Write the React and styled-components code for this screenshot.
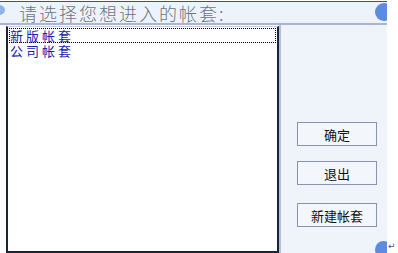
import React from 'react';
import styled, { createGlobalStyle } from 'styled-components';

const accounts = ['新版帐套', '公司帐套'];
const actions = [
  { label: '确定', top: 97 },
  { label: '退出', top: 15 },
  { label: '新建帐套', top: 18 },
];

const App = () => (
  <Page>
    <GlobalStyle />
    <Frame>
      <TopLine />
      <Header>
        <Title>请选择您想进入的帐套:</Title>
      </Header>
      <Body>
        <ListColumn>
          <ListBox>
            {accounts.map((name, i) => (
              <Option key={name} focused={i === 0}>{name}</Option>
            ))}
          </ListBox>
        </ListColumn>
        <Divider />
        <Side>
          {actions.map(a => (
            <Button key={a.label} top={a.top}>{a.label}</Button>
          ))}
        </Side>
      </Body>
      <CornerDot left />
      <CornerDot top />
      <CornerDot />
    </Frame>
    <Return>↵</Return>
  </Page>
);

export default App;

const GlobalStyle = createGlobalStyle`
  body {
    margin: 0;
    background: #fff;
    font-family: "Noto Sans CJK SC", "Liberation Sans", sans-serif;
  }
`

const Page = styled.div`
  position: relative;
  width: 398px;
  height: 253px;
  overflow: hidden;
`

const Frame = styled.div`
  position: relative;
  width: 387px;
  height: 253px;
  display: flex;
  flex-direction: column;
  overflow: hidden;
`

const TopLine = styled.div`
  height: 1px;
  margin-top: 1px;
  background: #2a52b0;
`

const Header = styled.div`
  height: 21px;
  background: #eef3fb;
  border-bottom: 2px solid #a7b5d2;
  display: flex;
  align-items: center;
  padding-left: 19px;
`

const Title = styled.div`
  font-size: 18px;
  line-height: 20px;
  color: #6d7385;
  letter-spacing: 2px;
  font-weight: 300;
  white-space: nowrap;
`

const Body = styled.div`
  flex: 1;
  display: flex;
`

const ListColumn = styled.div`
  width: 279px;
  padding: 1px 0 0 6px;
  box-sizing: border-box;
  background: #fbfcfe;
  display: flex;
`

const ListBox = styled.div`
  flex: 1;
  background: #fff;
  border-left: 2px solid #1b2240;
  border-right: 2px solid #1b2240;
  border-bottom: 2px solid #1b2240;
  border-top: 1px solid #c8d0e0;
  padding-top: 1px;
`

const Option = styled.div`
  height: 15px;
  line-height: 15px;
  font-size: 13px;
  letter-spacing: 3px;
  color: #1c20a8;
  padding-left: 1px;
  white-space: nowrap;
  outline: ${p => (p.focused ? '1px dotted #000' : 'none')};
  outline-offset: -1px;
  margin: 0 1px;
`

const Divider = styled.div`
  width: 2px;
  background: #b4c0d8;
`

const Side = styled.div`
  flex: 1;
  background: #eff4fb;
  display: flex;
  flex-direction: column;
  padding-left: 16px;
`

const Button = styled.div`
  width: 80px;
  height: 24px;
  margin-top: ${p => p.top}px;
  box-sizing: border-box;
  border: 1px solid #8793b3;
  background: #f3f6fb;
  color: #111;
  font-size: 13px;
  display: flex;
  align-items: center;
  justify-content: center;
`

const CornerDot = styled.div`
  position: absolute;
  border-radius: 50%;
  background: ${p => (p.left ? '#8fb2ea' : '#5c8ce0')};
  ${p => p.left
    ? 'left: -7px; top: 5px; width: 12px; height: 10px;'
    : p.top
      ? 'right: -6px; top: 3px; width: 18px; height: 18px;'
      : 'right: -5px; bottom: -5px; width: 17px; height: 17px;'}
`

const Return = styled.div`
  position: absolute;
  left: 388px;
  top: 241px;
  font-size: 9px;
  color: #555;
  font-family: "DejaVu Sans", sans-serif;
`
